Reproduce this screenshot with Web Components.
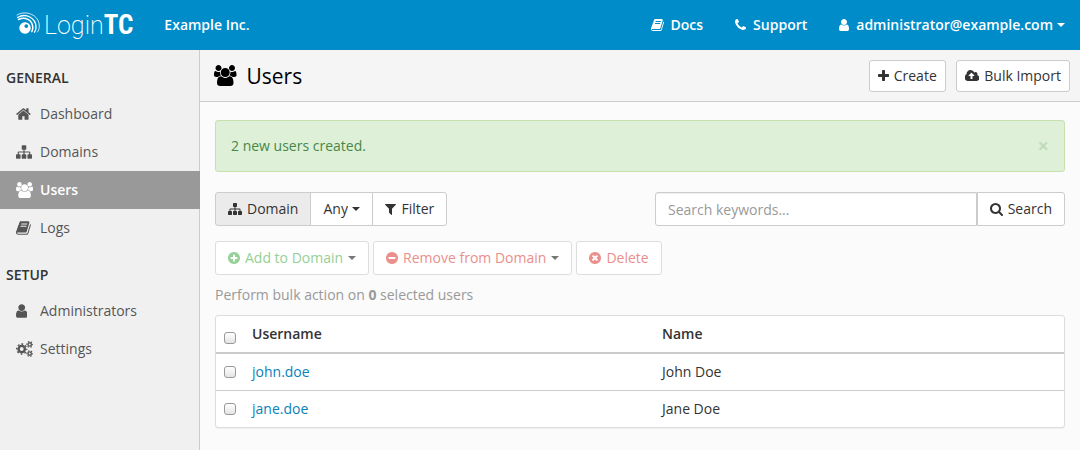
<!DOCTYPE html>
<html lang="en">
<head>
<meta charset="utf-8">
<meta name="viewport" content="width=device-width, initial-scale=1">
<title>Users</title>
<style>
  html, body { height: 100%; }
  body { margin: 0; background: #fbfbfb; color: #333; font: 14px/20px "Open Sans", "Noto Sans", sans-serif; }
</style>
</head>
<body>
<tc-app></tc-app>
<script>
const ICONS = {
  user: ['256 0 1280 1792', 'M1536 1399q0 109-62.5 187t-150.5 78h-854q-88 0-150.5-78t-62.5-187q0-85 8.5-160.5t31.5-152 58.5-131 94-89 134.5-34.5q131 128 313 128t313-128q76 0 134.5 34.5t94 89 58.5 131 31.5 152 8.5 160.5zm-256-887q0 159-112.5 271.5t-271.5 112.5-271.5-112.5-112.5-271.5 112.5-271.5 271.5-112.5 271.5 112.5 112.5 271.5z'],
  phone: ['192 0 1408 1792', 'M1600 1240q0 27-10 70.5t-21 68.5q-21 50-122 106-94 51-186 51-27 0-52.5-3.5t-57.5-12.5-47.5-14.5-55.5-20.5-49-18q-98-35-175-83-128-79-264.5-215.5t-215.5-264.5q-48-77-83-175-3-9-18-49t-20.5-55.5-14.5-47.5-12.5-57.5-3.5-52.5q0-92 51-186 56-101 106-122 25-11 68.5-21t70.5-10q14 0 21 3 18 6 53 76 11 19 30 54t35 63.5 31 53.5q3 4 17.5 25t21.5 35.5 7 28.5q0 20-28.5 50t-62 55-62 53-28.5 46q0 9 5 22.5t8.5 20.5 14 24 11.5 19q76 137 174 235t235 174q2 1 19 11.5t24 14 20.5 8.5 22.5 5q18 0 46-28.5t53-62 55-62 50-28.5q14 0 28.5 7t35.5 21.5 25 17.5q25 15 53.5 31t63.5 35 54 30q70 35 76 53 3 7 3 21z'],
  plus: ['192 0 1408 1792', 'M1600 736v192q0 40-28 68t-68 28h-416v416q0 40-28 68t-68 28h-192q-40 0-68-28t-28-68v-416h-416q-40 0-68-28t-28-68v-192q0-40 28-68t68-28h416v-416q0-40 28-68t68-28h192q40 0 68 28t28 68v416h416q40 0 68 28t28 68z'],
  search: ['64 0 1664 1792', 'M1216 832q0-185-131.5-316.5t-316.5-131.5-316.5 131.5-131.5 316.5 131.5 316.5 316.5 131.5 316.5-131.5 131.5-316.5zm512 832q0 52-38 90t-90 38q-54 0-90-38l-343-342q-179 124-399 124-143 0-273.5-55.5t-225-150-150-225-55.5-273.5 55.5-273.5 150-225 225-150 273.5-55.5 273.5 55.5 225 150 150 225 55.5 273.5q0 220-124 399l343 343q37 37 37 90z'],
  home: ['64 0 1664 1792', 'M1472 992v480q0 26-19 45t-45 19h-384v-384h-256v384h-384q-26 0-45-19t-19-45v-480q0-1 .5-3t.5-3l575-474 575 474q1 2 1 6zm223-69l-62 74q-8 9-21 11h-3q-13 0-21-7l-692-577-692 577q-12 8-24 7-13-2-21-11l-62-74q-8-10-7-23.5t11-21.5l719-599q32-26 76-26t76 26l244 204v-195q0-14 9-23t23-9h192q14 0 23 9t9 23v408l219 182q10 8 11 21.5t-7 23.5z'],
  sitemap: ['0 0 1792 1792', 'M1792 1248v320q0 40-28 68t-68 28h-320q-40 0-68-28t-28-68v-320q0-40 28-68t68-28h96v-192h-512v192h96q40 0 68 28t28 68v320q0 40-28 68t-68 28h-320q-40 0-68-28t-28-68v-320q0-40 28-68t68-28h96v-192h-512v192h96q40 0 68 28t28 68v320q0 40-28 68t-68 28h-320q-40 0-68-28t-28-68v-320q0-40 28-68t68-28h96v-192q0-52 38-90t90-38h512v-192h-96q-40 0-68-28t-28-68v-320q0-40 28-68t68-28h320q40 0 68 28t28 68v320q0 40-28 68t-68 28h-96v192h512q52 0 90 38t38 90v192h96q40 0 68 28t28 68z'],
  filter: ['192 0 1408 1792', 'M1595 295q17 41-14 70l-493 493v742q0 42-39 59-13 5-25 5-27 0-45-19l-256-256q-19-19-19-45v-486l-493-493q-31-29-14-70 17-39 59-39h1280q42 0 59 39z'],
  book: ['64 0 1664 1792', 'M1703 478q40 57 18 129l-275 906q-19 64-76.5 107.5t-122.5 43.5h-923q-77 0-148.5-53.5t-99.5-131.5q-24-67-2-127 0-4 3-27t4-37q1-8-3-21.5t-3-19.5q2-11 8-21t16.5-23.5 16.5-23.5q23-38 45-91.5t30-91.5q3-10 .5-30t-.5-28q3-11 17-28t17-23q21-36 42-92t25-90q1-9-2.5-32t.5-28q4-13 22-30.5t22-22.5q19-26 42.5-84.5t27.5-96.5q1-8-3-25.5t-2-26.5q2-8 9-18t18-23 17-21q8-12 16.5-30.5t15-35 16-36 19.5-32 26.5-23.5 36-11.5 47.5 5.5l-1 3q38-9 51-9h761q74 0 114 56t18 130l-274 906q-36 119-71.5 153.5t-128.5 34.5h-869q-27 0-38 15-11 16-1 43 24 70 144 70h923q29 0 56-15.5t35-41.5l300-987q7-22 5-57 38 15 59 43zm-1064 2q-4 13 2 22.5t20 9.5h608q13 0 25.5-9.5t16.5-22.5l21-64q4-13-2-22.5t-20-9.5h-608q-13 0-25.5 9.5t-16.5 22.5zm-83 256q-4 13 2 22.5t20 9.5h608q13 0 25.5-9.5t16.5-22.5l21-64q4-13-2-22.5t-20-9.5h-608q-13 0-25.5 9.5t-16.5 22.5z'],
  upload: ['0 0 1856 1792', 'M1216 864q0-14-9-23l-352-352q-9-9-23-9t-23 9l-351 351q-10 12-10 24 0 14 9 23t23 9h224v352q0 13 9.5 22.5t22.5 9.5h192q13 0 22.5-9.5t9.5-22.5v-352h224q13 0 22.5-9.5t9.5-22.5zm640 288q0 159-112.5 271.5t-271.5 112.5h-1088q-185 0-316.5-131.5t-131.5-316.5q0-130 70-240t188-165q-2-30-2-43 0-212 150-362t362-150q156 0 285.5 87t188.5 231q71-62 166-62 106 0 181 75t75 181q0 76-41 138 130 31 213.5 135.5t83.5 238.5z'],
  group: ['0 0 1920 1792', 'M593 896q-162 5-265 128h-134q-82 0-138-40.5t-56-118.5q0-353 124-353 6 0 43.5 21t97.5 42.5 119 21.5q67 0 133-23-5 37-5 66 0 139 81 256zm1071 637q0 120-73 189.5t-194 69.5h-874q-121 0-194-69.5t-73-189.5q0-53 3.5-103.5t14-109 26.5-108.5 43-97.5 62-81 85.5-53.5 111.5-20q10 0 43 21.5t73 48 107 48 135 21.5 135-21.5 107-48 73-48 43-21.5q61 0 111.5 20t85.5 53.5 62 81 43 97.5 26.5 108.5 14 109 3.5 103.5zm-1024-1277q0 106-75 181t-181 75-181-75-75-181 75-181 181-75 181 75 75 181zm704 384q0 159-112.5 271.5t-271.5 112.5-271.5-112.5-112.5-271.5 112.5-271.5 271.5-112.5 271.5 112.5 112.5 271.5zm576 225q0 78-56 118.5t-138 40.5h-134q-103-123-265-128 81-117 81-256 0-29-5-66 66 23 133 23 59 0 119-21.5t97.5-42.5 43.5-21q124 0 124 353zm-128-609q0 106-75 181t-181 75-181-75-75-181 75-181 181-75 181 75 75 181z'],
  add: ['128 0 1536 1792', 'M1344 960v-128q0-26-19-45t-45-19h-256v-256q0-26-19-45t-45-19h-128q-26 0-45 19t-19 45v256h-256q-26 0-45 19t-19 45v128q0 26 19 45t45 19h256v256q0 26 19 45t45 19h128q26 0 45-19t19-45v-256h256q26 0 45-19t19-45zm320-64q0 209-103 385.5t-279.5 279.5-385.5 103-385.5-103-279.5-279.5-103-385.5 103-385.5 279.5-279.5 385.5-103 385.5 103 279.5 279.5 103 385.5z'],
  minus: ['128 0 1536 1792', 'M1344 960v-128q0-26-19-45t-45-19h-768q-26 0-45 19t-19 45v128q0 26 19 45t45 19h768q26 0 45-19t19-45zm320-64q0 209-103 385.5t-279.5 279.5-385.5 103-385.5-103-279.5-279.5-103-385.5 103-385.5 279.5-279.5 385.5-103 385.5 103 279.5 279.5 103 385.5z'],
  remove: ['128 0 1536 1792', 'M1277 1122q0-26-19-45l-181-181 181-181q19-19 19-45 0-27-19-46l-90-90q-19-19-46-19-26 0-45 19l-181 181-181-181q-19-19-45-19-27 0-46 19l-90 90q-19 19-19 46 0 26 19 45l181 181-181 181q-19 19-19 45 0 27 19 46l90 90q19 19 46 19 26 0 45-19l181-181 181 181q19 19 45 19 27 0 46-19l90-90q19-19 19-46zm387-226q0 209-103 385.5t-279.5 279.5-385.5 103-385.5-103-279.5-279.5-103-385.5 103-385.5 279.5-279.5 385.5-103 385.5 103 279.5 279.5 103 385.5z'],
  caret: ['0 0 8 4', 'M0 0h8L4 4z']
};
/* A gear: a ring with a dashed ring of teeth around it. */
const gear = (x, y, r, w, teeth, len) => {
  const out = r + w / 2 + len / 2 - 10, seg = Math.PI * out / teeth;
  return `<g fill="none" stroke="currentColor" transform="translate(${x} ${y})"><circle r="${r}" stroke-width="${w}"/><circle r="${out}" stroke-width="${len}" stroke-dasharray="${seg}" stroke-dashoffset="${seg / 2}"/></g>`;
};
const GEARS = gear(640, 896, 350, 270, 8, 160) + gear(1536, 384, 190, 160, 6, 120) + gear(1536, 1408, 190, 160, 6, 120);

class TcElement extends HTMLElement {
  constructor() { super(); this.attachShadow({ mode: 'open' }); }
  connectedCallback() {
    if (this.shadowRoot.childNodes.length) return;
    const t = document.createElement('template');
    t.innerHTML = this.view();
    this.shadowRoot.append(t.content.cloneNode(true));
  }
  attr(n) { return this.getAttribute(n) || ''; }
}
const define = (name, view) => customElements.define(name, class extends TcElement {
  view() { return view(this); }
});

define('tc-icon', el => {
  const name = el.attr('name');
  const [box, path] = name === 'cogs' ? ['0 0 1920 1792', ''] : ICONS[name];
  return `<style>:host{display:inline-flex;flex:none;height:var(--icon-size,14px)}svg{display:block;height:100%;width:auto;fill:currentColor}
    :host([name=caret]){height:4px}</style>
  <svg viewBox="${box}" style="aspect-ratio:${box.split(' ')[2]}/${box.split(' ')[3]}" aria-hidden="true">${path ? `<path d="${path}"/>` : GEARS}</svg>`;
});

define('tc-logo', () => `
  <style>
    :host{display:block}
    a{display:flex;align-items:baseline;color:#fff;text-decoration:none;line-height:46px}
    svg{flex:none;align-self:center;width:24px;height:30px;margin-right:4px}
    .thin{font-family:Roboto,sans-serif;font-size:25px;font-weight:200}
    .bold{font-family:"Liberation Sans Narrow","Roboto Condensed",Roboto,sans-serif;font-size:27px;font-weight:700}
  </style>
  <a href="#" aria-label="LoginTC">
    <svg viewBox="0 0 24 30" fill="#fff" aria-hidden="true">
      <path fill-rule="evenodd" d="M9 12.300a5.700 5.700 0 1 0 .01 0zM10.300 14.200a1.900 1.900 0 1 1-.01 0z"/>
      <g fill="none" stroke="#fff" stroke-linecap="round">
        <path d="M2.500 9.500C9 6 16.500 10 16.800 17.500c0 1.800-.4 3-1 4" stroke-width="1.500"/>
        <path d="M1.500 7.500C10 2.500 19.800 8 20 17c0 2.200-.5 3.800-1.500 5.200" stroke-width="1.300"/>
        <path d="M1 5C10-.5 23.300 5 23.300 16c0 2.400-.6 4.500-1.800 6" stroke-width=".8"/>
      </g>
    </svg><span class="thin">Login</span><span class="bold">TC</span>
  </a>`);

define('tc-topbar', () => `
  <style>
    :host{display:flex;align-items:center;height:50px;padding:0 15px 0 16px;background:#008cc9;color:#fff;font-weight:600}
    .org{margin-left:31px}
    nav{display:flex;gap:32px;margin-left:auto}
    a{display:flex;align-items:center;gap:7px;color:#fff;text-decoration:none}
    .account{gap:4px}
    .account span{margin-left:3px}
  </style>
  <tc-logo></tc-logo><span class="org">Example Inc.</span>
  <nav aria-label="Account">
    <a href="#docs"><tc-icon name="book"></tc-icon>Docs</a>
    <a href="#support"><tc-icon name="phone"></tc-icon>Support</a>
    <a class="account" href="#account"><tc-icon name="user"></tc-icon><span>administrator@example.com</span><tc-icon name="caret"></tc-icon></a>
  </nav>`);

define('tc-nav-group', el => `
  <style>
    :host{display:block}
    h2{margin:0;padding:18px 6px 7px;font:600 14px/20px "Open Sans",sans-serif;color:#333}
  </style>
  <h2>${el.attr('label')}</h2><slot></slot>`);

define('tc-nav-item', el => `
  <style>
    :host{display:block;margin-right:-1px}
    a{display:grid;grid-template-columns:24px 1fr;align-items:center;height:38px;padding-left:16px;color:#555;text-decoration:none}
    :host([active]) a{background:#999;color:#fff;font-weight:600}
    tc-icon{--icon-size:16px}
  </style>
  <a href="#${el.attr('icon')}" ${el.hasAttribute('active') ? 'aria-current="page"' : ''}><tc-icon name="${el.attr('icon')}"></tc-icon><span><slot></slot></span></a>`);

define('tc-sidebar', () => `
  <style>:host{display:block;background:#f0f0f0;border-right:1px solid #ccc}</style>
  <nav aria-label="Main">
    <tc-nav-group label="GENERAL">
      <tc-nav-item icon="home">Dashboard</tc-nav-item>
      <tc-nav-item icon="sitemap">Domains</tc-nav-item>
      <tc-nav-item icon="group" active>Users</tc-nav-item>
      <tc-nav-item icon="book">Logs</tc-nav-item>
    </tc-nav-group>
    <tc-nav-group label="SETUP">
      <tc-nav-item icon="user">Administrators</tc-nav-item>
      <tc-nav-item icon="cogs">Settings</tc-nav-item>
    </tc-nav-group>
  </nav>`);

define('tc-button', el => `
  <style>
    :host{display:block}
    button{display:flex;align-items:center;gap:5px;box-sizing:border-box;height:34px;margin:0;padding:0 12px;border:1px solid #ccc;border-radius:var(--radius,3px);background:#fff;color:#333;font:inherit;white-space:nowrap}
    :host([small]) button{height:32px;padding:0 8px}
    :host([pressed]) button{background:#ebebeb}
    :host([tone]) button{border-color:#ddd;color:#ea8f8b}
    :host([tone=green]) button{color:#95d095}
    :host([tone]) tc-icon[name=caret]{color:#777}
  </style>
  <button type="button" ${el.hasAttribute('tone') ? 'disabled' : ''} ${el.hasAttribute('menu') ? 'aria-haspopup="menu"' : ''}><tc-icon name="${el.attr('icon')}"></tc-icon><slot></slot>${el.hasAttribute('menu') ? '<tc-icon name="caret"></tc-icon>' : ''}</button>`);

define('tc-page-header', el => `
  <style>
    :host{display:flex;align-items:center;gap:10px;box-sizing:border-box;height:52px;padding:0 10px 0 14px;background:#f5f5f5;border-bottom:1px solid #ccc}
    h1{flex:1;margin:0;font:400 21px/30px "Open Sans",sans-serif;color:#000}
    .icon{--icon-size:21px;color:#000}
  </style>
  <tc-icon class="icon" name="group"></tc-icon><h1>${el.attr('heading')}</h1><slot></slot>`);

define('tc-alert', () => `
  <style>
    :host{display:flex;align-items:center;justify-content:space-between;padding:15px;border:1px solid #c5e2ae;border-radius:3px;background:#dff0d8;color:#468847}
    button{margin:0;padding:0;border:0;background:none;color:#bfdcbc;font:700 20px/20px "Open Sans",sans-serif}
  </style>
  <span role="status"><slot></slot></span><button type="button" aria-label="Close">×</button>`);

define('tc-filter', () => `
  <style>
    :host{display:flex}
    .first{--radius:3px 0 0 3px}
    .last{--radius:0 3px 3px 0}
    .pick{display:grid;align-items:center;margin:0 -1px}
    .pick > *{grid-area:1/1}
    select{appearance:none;box-sizing:border-box;height:34px;margin:0;padding:0 24px 0 12px;border:1px solid #ccc;border-radius:0;background:#fff;color:#333;font:inherit}
    .pick tc-icon{justify-self:end;margin-right:13px;pointer-events:none}
  </style>
  <tc-button class="first" icon="sitemap" pressed>Domain</tc-button>
  <label class="pick"><select aria-label="Domain"><option>Any</option></select><tc-icon name="caret"></tc-icon></label>
  <tc-button class="last" icon="filter">Filter</tc-button>`);

define('tc-search', () => `
  <style>
    :host{display:block;flex:0 1 410px}
    form{display:flex}
    input{flex:1;min-width:0;box-sizing:border-box;height:34px;margin:0;padding:0 12px;border:1px solid #ccc;border-radius:3px 0 0 3px;background:#fff;box-shadow:inset 0 1px 1px #0001;color:#333;font:inherit}
    input::placeholder{color:#999}
    tc-button{--radius:0 3px 3px 0}
  </style>
  <form role="search"><input type="text" aria-label="Search keywords" placeholder="Search keywords..."><tc-button icon="search">Search</tc-button></form>`);

define('tc-bulk', () => `
  <style>
    .row{display:flex;gap:4px}
    :host{display:block;margin-top:15px}
    p{margin:10px 0;color:#999}
    b{font-weight:700}
  </style>
  <div class="row">
    <tc-button icon="add" tone="green" menu>Add to Domain</tc-button>
    <tc-button icon="minus" tone="red" menu>Remove from Domain</tc-button>
    <tc-button icon="remove" tone="red">Delete</tc-button>
  </div>
  <p>Perform bulk action on <b>0</b> selected users</p>`);

define('tc-user-table', () => {
  const users = [['john.doe', 'John Doe'], ['jane.doe', 'Jane Doe']];
  return `
  <style>
    :host{display:block;border:1px solid #ddd;border-radius:3px;background:#fff;box-shadow:0 1px 1px #0000000d}
    table{width:100%;table-layout:fixed;border-collapse:separate;border-spacing:0}
    th,td{height:20px;padding:8px;text-align:left;border-bottom:1px solid #ccc}
    th{font-weight:600;border-bottom-width:2px}
    tr:last-child td{border-bottom:0}
    .check{width:28px}
    a{color:#0a7fba;text-decoration:none}
    input{display:block;appearance:none;box-sizing:border-box;width:12px;height:12px;margin:0;border:1px solid #999;border-radius:3px;background:linear-gradient(#fff,#e4e4e4)}
    th input{margin-top:8px}
  </style>
  <table>
    <colgroup><col class="check"><col><col></colgroup>
    <thead><tr><th><input type="checkbox" aria-label="Select all users"></th><th scope="col">Username</th><th scope="col">Name</th></tr></thead>
    <tbody>${users.map(([u, n]) => `<tr><td><input type="checkbox" aria-label="Select ${u}"></td><td><a href="#${u}">${u}</a></td><td>${n}</td></tr>`).join('')}</tbody>
  </table>`;
});

define('tc-app', () => `
  <style>
    :host{display:grid;grid-template:auto 1fr / 200px minmax(0,1fr);min-height:100%}
    tc-topbar{grid-column:1/-1}
    .content{padding:18px 15px}
    .tools{display:flex;justify-content:space-between;gap:20px;margin-top:20px}
  </style>
  <tc-topbar></tc-topbar>
  <tc-sidebar></tc-sidebar>
  <main>
    <tc-page-header heading="Users">
      <tc-button icon="plus" small>Create</tc-button>
      <tc-button icon="upload" small>Bulk Import</tc-button>
    </tc-page-header>
    <div class="content">
      <tc-alert>2 new users created.</tc-alert>
      <div class="tools"><tc-filter></tc-filter><tc-search></tc-search></div>
      <tc-bulk></tc-bulk>
      <tc-user-table></tc-user-table>
    </div>
  </main>`);
</script>
</body>
</html>
